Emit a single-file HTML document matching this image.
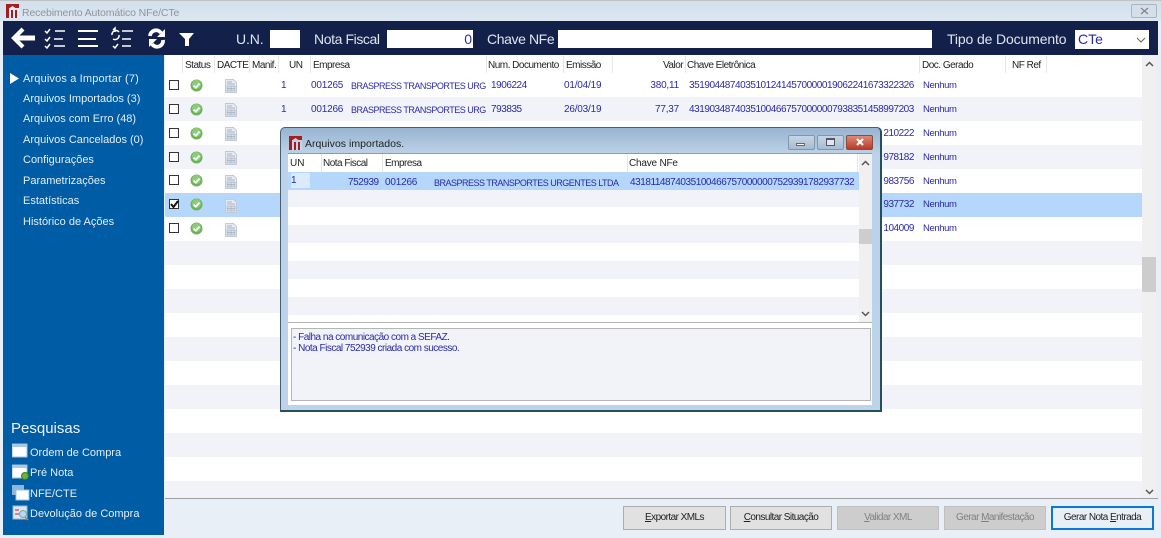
<!DOCTYPE html>
<html><head><meta charset="utf-8"><style>
*{box-sizing:border-box}
html,body{margin:0;padding:0;width:1161px;height:538px;overflow:hidden;background:#e9eff7;font-family:"Liberation Sans",sans-serif}
.a,.t{position:absolute}
.t{white-space:nowrap;font-size:10px;line-height:12px}
.h{color:#222;letter-spacing:-.5px}
.b{color:#2a2aa8;letter-spacing:-.2px}
.e{font-size:9px;letter-spacing:-.5px}
.c{letter-spacing:-.45px}
.m{font-size:9.500px;letter-spacing:-.4px}
.l{letter-spacing:-.5px}
.s{color:#e4eef7;font-size:11px;letter-spacing:0;line-height:14px}
.n{color:#dfe4ee;font-size:14px;line-height:18px}
.w{left:165px;width:977px;position:absolute}
.sep{position:absolute;top:56px;width:1px;height:17px;background:#e6e6e6}
.cb{position:absolute;left:169px;width:10px;height:10px;border:1.5px solid #333;background:#fff}
.btn{position:absolute;top:506px;height:24px;border:1px solid #adadad;background:#e1e1e1;color:#222;font-size:10px;line-height:22px;text-align:center;letter-spacing:-.55px}
.dis{background:#cdcdcd;border-color:#c0c0c0;color:#808080}
</style></head><body>
<svg width="0" height="0" style="position:absolute"><defs>
<g id="ok"><circle cx="6.500" cy="6.500" r="6" fill="#6cb35a"/><circle cx="6.500" cy="5.500" r="4.500" fill="#8ccb7c"/><path d="M3.600 6.600 5.700 8.600 9.500 4.600" fill="none" stroke="#fff" stroke-width="1.800"/></g>
<g id="doc"><path d="M.5.5h8l3 3v10h-11z" fill="#e8ecf2" stroke="#c3cad4"/><path d="M2 3h5M2 5h8" stroke="#a9b2c0"/><rect x="2" y="7" width="8" height="5" fill="#d3dbe7" stroke="#a5b1c3" stroke-width=".7"/><path d="M2 9.500h8M6 7v5" stroke="#a5b1c3" stroke-width=".7"/></g>
<g id="logo"><rect width="13" height="14" fill="#fff" opacity=".25"/><path d="M0 0h13v4H9.500L6.500 2 3.500 4H3v10H0z" fill="#a51e1e"/><path d="M5 6h2v8H5zM9 6h2v8H9z" fill="#a51e1e"/></g>
</defs></svg>

<!-- title bar -->
<div class="a" style="left:0;top:0;width:1161px;height:21px;background:linear-gradient(#d3dfea,#dce7f2);border-top:1px solid #bfc3c6"></div>
<svg class="a" style="left:6px;top:4px" width="13" height="14"><use href="#logo"/></svg>
<div class="t" style="left:22px;top:7px;color:#8f949b;font-size:10.500px;letter-spacing:-.13px">Recebimento Automático NFe/CTe</div>
<div class="a" style="left:1131px;top:4px;width:26px;height:14px;border:1px solid #a9b4bf;border-radius:2px;background:#d6dfe8"></div>
<svg class="a" style="left:1140px;top:7px" width="9" height="8"><path d="M1 1 8 7M8 1 1 7" stroke="#7d8791" stroke-width="1.300"/></svg>

<!-- nav bar -->
<div class="a" style="left:3px;top:21px;width:1155px;height:34px;background:#13204a"></div>
<svg class="a" style="left:10px;top:26px" width="190" height="26" fill="none" stroke="#fff">
<path d="M13 3 4 12l9 9" stroke-width="4.200"/><path d="M5 12h20" stroke-width="5"/>
<g stroke-width="1.500"><path d="M35 5l2 2 3-4M35 13l2 2 3-4M35 20l2 2 3-4"/><path d="M45 5h10M44 13h9M44 20h11"/><path d="M68 5h20M68 13h18M68 20h20" stroke-width="2"/>
<path d="M103 4l2-2v4M102 9a4 4 0 0 1 7-3M109 9a4 4 0 0 1-6 4M103 20l2 2 3-4"/><path d="M112 5h11M112 13h9M112 20h9"/></g>
<path d="M140 10a6 6 0 0 1 11-3M153 14a6 6 0 0 1-11 4" stroke-width="3.800"/><path d="M155 3v8h-8zM139 21v-8h8z" fill="#fff" stroke="none"/>
<path d="M169 7h15l-5 6v7h-4v-7z" fill="#fff" stroke="none"/></svg>
<div class="t n" style="left:236px;top:30px;letter-spacing:-.1px">U.N.</div>
<div class="a" style="left:270px;top:30px;width:30px;height:18px;background:#fff"></div>
<div class="t n" style="left:314px;top:30px;letter-spacing:-.4px">Nota Fiscal</div>
<div class="a" style="left:387px;top:30px;width:86px;height:18px;background:#fff;color:#2a2aa8;font-size:14px;line-height:19px;text-align:right;padding-right:1px">0</div>
<div class="t n" style="left:487px;top:30px;letter-spacing:-.4px">Chave NFe</div>
<div class="a" style="left:558px;top:30px;width:374px;height:18px;background:#fff"></div>
<div class="t n" style="left:947px;top:30px;letter-spacing:-.13px">Tipo de Documento</div>
<div class="a" style="left:1075px;top:30px;width:74px;height:19px;background:#fff;color:#2a2aa8;font-size:14px;line-height:19px;padding-left:3px">CTe</div>
<svg class="a" style="left:1136px;top:37px" width="10" height="6"><path d="M1 1l4 4 4-4" fill="none" stroke="#666"/></svg>

<!-- sidebar -->
<div class="a" style="left:3px;top:55px;width:161px;height:480px;background:#005ca4"></div>
<svg class="a" style="left:10px;top:73px" width="10" height="11"><path d="M0 0 9 5.500 0 11z" fill="#fff"/></svg>
<div class="t s" style="left:23px;top:72px;letter-spacing:.15px">Arquivos a Importar (7)</div>
<div class="t s" style="left:23px;top:92px">Arquivos Importados (3)</div>
<div class="t s" style="left:23px;top:112px">Arquivos com Erro (48)</div>
<div class="t s" style="left:23px;top:133px">Arquivos Cancelados (0)</div>
<div class="t s" style="left:23px;top:153px">Configurações</div>
<div class="t s" style="left:23px;top:174px">Parametrizações</div>
<div class="t s" style="left:23px;top:194px">Estatísticas</div>
<div class="t s" style="left:23px;top:215px">Histórico de Ações</div>
<div class="t" style="left:11px;top:419px;color:#eef4fa;font-size:15px;line-height:19px">Pesquisas</div>
<svg class="a" style="left:12px;top:443px" width="18" height="80">
<rect x="0" y="1" width="15" height="13" fill="#fff" stroke="#9cc0e2"/><rect x="0" y="1" width="15" height="3" fill="#a8c8e8"/>
<rect x="0" y="22" width="15" height="13" fill="#fff" stroke="#9cc0e2"/><rect x="0" y="22" width="15" height="3" fill="#a8c8e8"/><circle cx="13" cy="33" r="3.500" fill="#6cb33e" stroke="#3f7c22"/>
<rect x="0" y="42" width="12" height="10" fill="#8db6dd"/><rect x="4" y="47" width="13" height="10" fill="#fff" stroke="#9cc0e2"/>
<rect x="1" y="63" width="14" height="13" fill="#dfe8f2" stroke="#9cb8d4"/><path d="M3 67h4M3 71h4" stroke="#c66" stroke-width="1.500"/><circle cx="11" cy="71" r="3.500" fill="#b8d8f4" stroke="#7aa"/><path d="M13 74l3 3" stroke="#d08030" stroke-width="1.500"/></svg>
<div class="t s" style="left:30px;top:446px">Ordem de Compra</div>
<div class="t s" style="left:30px;top:466px">Pré Nota</div>
<div class="t s" style="left:30px;top:487px">NFE/CTE</div>
<div class="t s" style="left:30px;top:507px">Devolução de Compra</div>

<!-- main table -->
<div class="w" style="top:55px;height:443px;background:#fff"></div>
<div class="w" style="top:97px;height:24px;background:#f1f3f9"></div>
<div class="w" style="top:145px;height:24px;background:#f1f3f9"></div>
<div class="w" style="top:193px;height:24px;background:#b4d7fb"></div>
<div class="w" style="top:241px;height:24px;background:#f1f3f9"></div>
<div class="w" style="top:289px;height:24px;background:#f1f3f9"></div>
<div class="w" style="top:337px;height:24px;background:#f1f3f9"></div>
<div class="w" style="top:385px;height:24px;background:#f1f3f9"></div>
<div class="w" style="top:433px;height:24px;background:#f1f3f9"></div>
<div class="w" style="top:481px;height:17px;background:#f1f3f9"></div>
<div class="a" style="left:165px;top:498px;width:993px;height:1px;background:#a0a0a0"></div>
<div class="a" style="left:1142px;top:55px;width:14px;height:443px;background:#f0f0f0"></div>
<div class="a" style="left:1142px;top:257px;width:14px;height:35px;background:#cdcdcd"></div>
<svg class="a" style="left:1145px;top:61px" width="9" height="6"><path d="M1 5l3.500-3.500L8 5" fill="none" stroke="#555" stroke-width="1.500"/></svg>
<svg class="a" style="left:1145px;top:489px" width="9" height="6"><path d="M1 1l3.500 3.500L8 1" fill="none" stroke="#555" stroke-width="1.500"/></svg>

<i class="sep" style="left:182px"></i><i class="sep" style="left:214px"></i><i class="sep" style="left:249px"></i><i class="sep" style="left:278px"></i><i class="sep" style="left:310px"></i><i class="sep" style="left:486px"></i><i class="sep" style="left:563px"></i><i class="sep" style="left:612px"></i><i class="sep" style="left:685px"></i><i class="sep" style="left:919px"></i><i class="sep" style="left:1005px"></i><i class="sep" style="left:1046px"></i>
<div class="t h" style="left:185px;top:60px">Status</div>
<div class="t h" style="left:217px;top:60px">DACTE</div>
<div class="t h" style="left:252px;top:60px">Manif.</div>
<div class="t h" style="left:289px;top:60px">UN</div>
<div class="t h" style="left:313px;top:60px">Empresa</div>
<div class="t h" style="left:488px;top:60px">Num. Documento</div>
<div class="t h" style="left:566px;top:60px">Emissão</div>
<div class="t h" style="left:663px;top:60px">Valor</div>
<div class="t h" style="left:687px;top:60px">Chave Eletrônica</div>
<div class="t h" style="left:922px;top:60px">Doc. Gerado</div>
<div class="t h" style="left:1012px;top:60px">NF Ref</div>

<!-- checkboxes + icons -->
<div class="cb" style="top:80px"></div><div class="cb" style="top:104px"></div><div class="cb" style="top:128px"></div><div class="cb" style="top:152px"></div><div class="cb" style="top:175px"></div>
<div class="cb" style="top:199px"></div><svg class="a" style="left:170px;top:200px" width="9" height="9"><path d="M1 4l2.500 3L8 1" fill="none" stroke="#111" stroke-width="2"/></svg>
<div class="cb" style="top:223px"></div>
<svg class="a" style="left:190px;top:79px" width="13" height="156"><use href="#ok" y="0"/><use href="#ok" y="24"/><use href="#ok" y="48"/><use href="#ok" y="72"/><use href="#ok" y="95"/><use href="#ok" y="119"/><use href="#ok" y="143"/></svg>
<svg class="a" style="left:225px;top:79px" width="12" height="160"><use href="#doc" y="0"/><use href="#doc" y="24"/><use href="#doc" y="48"/><use href="#doc" y="72"/><use href="#doc" y="96"/><use href="#doc" y="120"/><use href="#doc" y="144"/></svg>

<!-- row data -->
<div class="t b" style="left:281px;top:80px">1</div><div class="t b" style="left:311px;top:80px">001265</div><div class="t b e" style="left:351px;top:80px;width:135px;overflow:hidden">BRASPRESS TRANSPORTES URGENTES</div><div class="t b c" style="left:491px;top:80px">1906224</div><div class="t b" style="left:564px;top:80px">01/04/19</div><div class="t b" style="left:620px;top:80px;width:59px;text-align:right">380,11</div><div class="t b c" style="left:689px;top:80px">35190448740351012414570000019062241673322326</div><div class="t b m" style="left:923px;top:80px">Nenhum</div>
<div class="t b" style="left:281px;top:104px">1</div><div class="t b" style="left:311px;top:104px">001266</div><div class="t b e" style="left:351px;top:104px;width:135px;overflow:hidden">BRASPRESS TRANSPORTES URGENTES</div><div class="t b c" style="left:491px;top:104px">793835</div><div class="t b" style="left:564px;top:104px">26/03/19</div><div class="t b" style="left:620px;top:104px;width:59px;text-align:right">77,37</div><div class="t b c" style="left:689px;top:104px">43190348740351004667570000007938351458997203</div><div class="t b m" style="left:923px;top:104px">Nenhum</div>
<div class="t b c" style="left:881px;top:128px;width:33px;text-align:right;overflow:hidden">210222</div><div class="t b m" style="left:923px;top:128px">Nenhum</div>
<div class="t b c" style="left:881px;top:152px;width:33px;text-align:right;overflow:hidden">978182</div><div class="t b m" style="left:923px;top:152px">Nenhum</div>
<div class="t b c" style="left:881px;top:176px;width:33px;text-align:right;overflow:hidden">983756</div><div class="t b m" style="left:923px;top:176px">Nenhum</div>
<div class="t b c" style="left:881px;top:199px;width:33px;text-align:right;overflow:hidden">937732</div><div class="t b m" style="left:923px;top:199px">Nenhum</div>
<div class="t b c" style="left:881px;top:223px;width:33px;text-align:right;overflow:hidden">104009</div><div class="t b m" style="left:923px;top:223px">Nenhum</div>

<!-- buttons -->
<div class="btn" style="left:623px;width:103px"><u>E</u>xportar XMLs</div>
<div class="btn" style="left:730px;width:102px"><u>C</u>onsultar Situação</div>
<div class="btn dis" style="left:837px;width:102px"><u>V</u>alidar XML</div>
<div class="btn dis" style="left:944px;width:102px">Gerar <u>M</u>anifestação</div>
<div class="btn" style="left:1051px;width:103px;border:2px solid #0a78d7;line-height:20px;background:#e9eff7">Gerar Nota <u>E</u>ntrada</div>

<!-- dialog -->
<div class="a" style="left:280px;top:127px;width:602px;height:285px;border:1px solid #4a5c70;border-bottom:2px solid #24505a;border-right:2px solid #24505a;border-radius:5px 5px 0 0;background:linear-gradient(#99b4d1 0,#bcd2e8 26px,#bcd3ea 100%)"></div>
<svg class="a" style="left:289px;top:136px" width="13" height="14"><use href="#logo"/></svg>
<div class="t" style="left:305px;top:138px;color:#222;font-size:10.500px;letter-spacing:.03px">Arquivos importados.</div>
<div class="a" style="left:788px;top:135px;width:27px;height:15px;border:1px solid #8496a8;border-radius:2px;background:linear-gradient(#c6d6e6,#a8bcd0)"></div>
<div class="a" style="left:796px;top:143px;width:9px;height:3px;background:#f4f6f8;border:1px solid #667"></div>
<div class="a" style="left:817px;top:135px;width:27px;height:15px;border:1px solid #8496a8;border-radius:2px;background:linear-gradient(#c6d6e6,#a8bcd0)"></div>
<div class="a" style="left:826px;top:138px;width:9px;height:8px;background:#dfe8f0;border:1px solid #556;border-top-width:2px"></div>
<div class="a" style="left:846px;top:135px;width:27px;height:15px;border:1px solid #8a4a40;border-radius:2px;background:linear-gradient(#dc8a78,#b83a26)"></div>
<svg class="a" style="left:855px;top:138px" width="10" height="9"><path d="M2 1l6 6M8 1 2 7" stroke="#fff" stroke-width="2"/></svg>
<div class="a" style="left:288px;top:153px;width:584px;height:252px;background:#fff;border-top:1px solid #8a9bad"></div>
<div class="a" style="left:288px;top:172px;width:571px;height:18px;background:#b4d7fb"></div>
<div class="a" style="left:288px;top:190px;width:571px;height:17px;background:#f1f3f9"></div>
<div class="a" style="left:288px;top:225px;width:571px;height:18px;background:#f1f3f9"></div>
<div class="a" style="left:288px;top:261px;width:571px;height:18px;background:#f1f3f9"></div>
<div class="a" style="left:288px;top:297px;width:571px;height:18px;background:#f1f3f9"></div>
<div class="a" style="left:859px;top:154px;width:13px;height:168px;background:#f0f0f0"></div>
<div class="a" style="left:859px;top:229px;width:13px;height:15px;background:#cdcdcd"></div>
<svg class="a" style="left:861px;top:160px" width="9" height="6"><path d="M1 5l3.500-3.500L8 5" fill="none" stroke="#555" stroke-width="1.500"/></svg>
<svg class="a" style="left:861px;top:311px" width="9" height="6"><path d="M1 1l3.500 3.500L8 1" fill="none" stroke="#555" stroke-width="1.500"/></svg>
<i class="sep" style="left:321px;top:154px;height:18px"></i><i class="sep" style="left:382px;top:154px;height:18px"></i><i class="sep" style="left:627px;top:154px;height:18px"></i><i class="sep" style="left:857px;top:154px;height:18px"></i>
<div class="t h" style="left:290px;top:158px;letter-spacing:0">UN</div>
<div class="t h" style="left:323px;top:158px">Nota Fiscal</div>
<div class="t h" style="left:385px;top:158px">Empresa</div>
<div class="t h" style="left:629px;top:158px;letter-spacing:-.2px">Chave NFe</div>
<div class="a" style="left:291px;top:173px;width:19px;height:15px;background:#d9ebfd"></div>
<div class="t b" style="left:291px;top:175px">1</div>
<div class="t b c" style="left:348px;top:177px">752939</div>
<div class="t b" style="left:385px;top:177px">001266</div>
<div class="t b e" style="left:434px;top:177px">BRASPRESS TRANSPORTES URGENTES LTDA</div>
<div class="t b c" style="left:630px;top:177px">43181148740351004667570000007529391782937732</div>
<div class="a" style="left:288px;top:322px;width:584px;height:1px;background:#b5b5b5"></div>
<div class="a" style="left:291px;top:328px;width:580px;height:73px;background:#f1f3f9;border:1px solid #b5b5b5"></div>
<div class="t b l" style="left:293px;top:332px">- Falha na comunicação com a SEFAZ.</div>
<div class="t b l" style="left:293px;top:343px">- Nota Fiscal 752939 criada com sucesso.</div>
</body></html>
